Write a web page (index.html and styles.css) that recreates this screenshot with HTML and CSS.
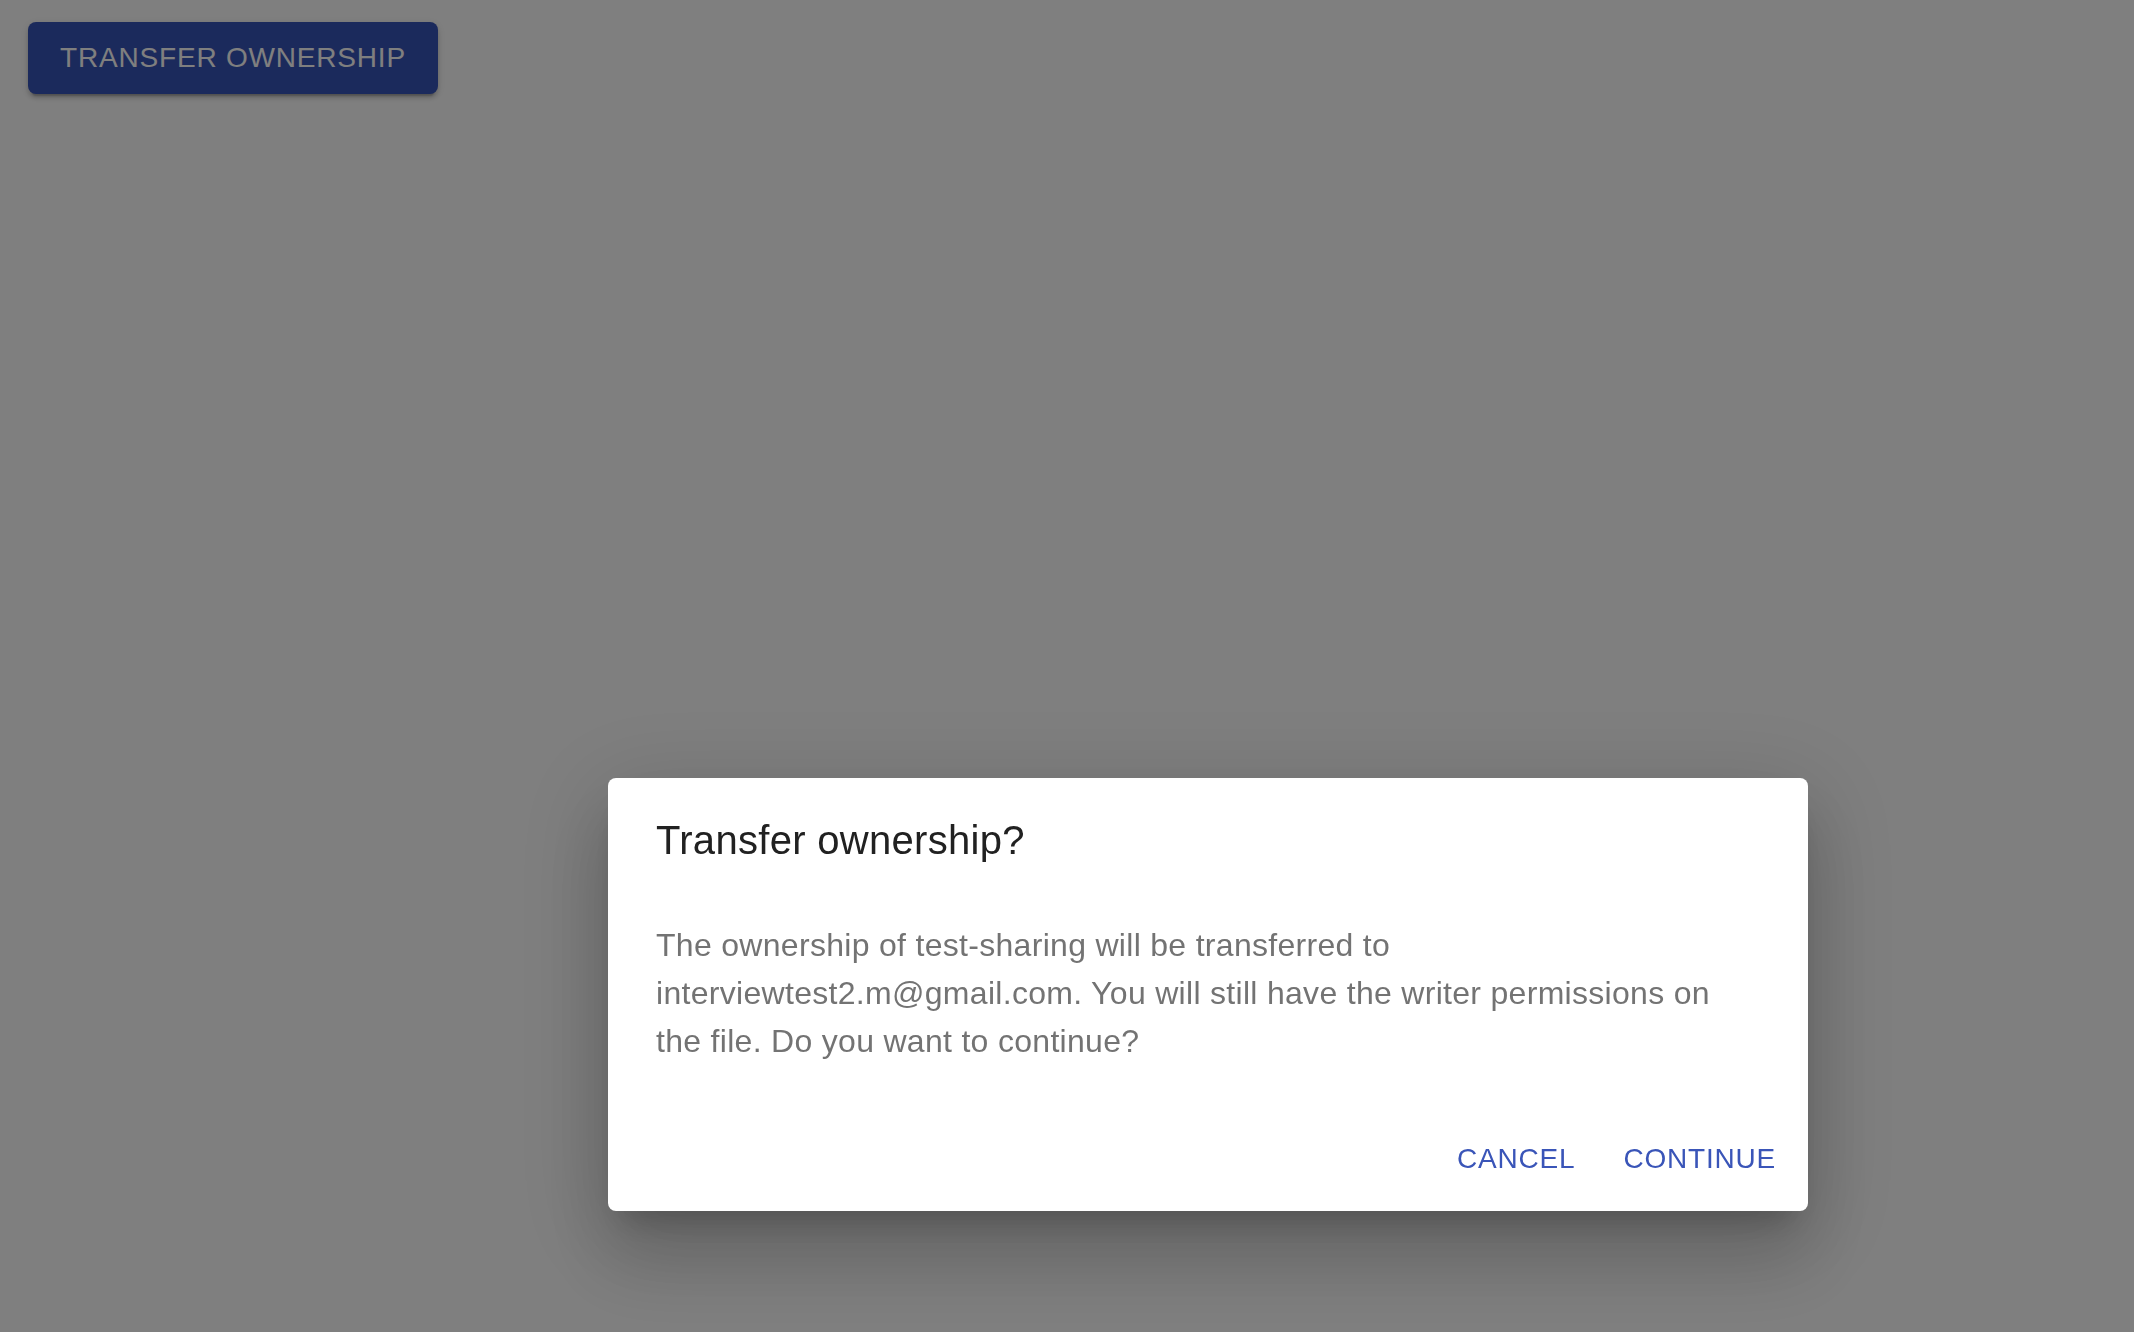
FILE: index.html
```html
<!DOCTYPE html>
<html lang="en">
<head>
<meta charset="utf-8">
<title>Transfer ownership</title>
<link rel="stylesheet" href="styles.css">
</head>
<body>
<div class="page">
  <button class="btn-contained">TRANSFER OWNERSHIP</button>
</div>
<div class="backdrop"></div>
<div class="dialog" role="dialog">
  <h2 class="dialog-title">Transfer ownership?</h2>
  <div class="dialog-content">
    <p class="dialog-text">The ownership of test-sharing will be transferred to interviewtest2.m@gmail.com. You will still have the writer permissions on the file. Do you want to continue?</p>
  </div>
  <div class="dialog-actions">
    <button class="btn-text">CANCEL</button>
    <button class="btn-text">CONTINUE</button>
  </div>
</div>
</body>
</html>
```

FILE: styles.css
```css
html, body {
  margin: 0;
  padding: 0;
  width: 100%;
  height: 100%;
  background: #ffffff;
  font-family: "Liberation Sans", Arial, sans-serif;
  overflow: hidden;
}

.page {
  padding: 22px 0 0 28px;
}

.btn-contained {
  display: inline-block;
  box-sizing: border-box;
  width: 410px;
  height: 72px;
  padding: 0 32px;
  border: none;
  border-radius: 8px;
  background: #3754b8;
  color: #ffffff;
  font-family: "Liberation Sans", Arial, sans-serif;
  font-size: 28px;
  letter-spacing: 0.8px;
  line-height: 72px;
  box-shadow: 0 6px 2px -4px rgba(0,0,0,0.2), 0 4px 4px 0 rgba(0,0,0,0.14), 0 2px 10px 0 rgba(0,0,0,0.12);
}

.backdrop {
  position: fixed;
  inset: 0;
  background: rgba(0, 0, 0, 0.5);
}

.dialog {
  position: fixed;
  left: 608px;
  top: 778px;
  width: 1200px;
  background: #ffffff;
  border-radius: 8px;
  box-shadow: 0 22px 30px -14px rgba(0,0,0,0.2), 0 48px 76px 6px rgba(0,0,0,0.14), 0 18px 92px 16px rgba(0,0,0,0.12);
}

.dialog-title {
  margin: 0;
  padding: 30px 48px 33px 48px;
  font-size: 40px;
  font-weight: 400;
  line-height: 64px;
  letter-spacing: 0.3px;
  color: #212121;
}

.dialog-content {
  padding: 16px 48px;
}

.dialog-text {
  margin: 0 0 24px 0;
  font-size: 32px;
  line-height: 48px;
  letter-spacing: 0.3px;
  color: #737373;
}

.dialog-actions {
  display: flex;
  justify-content: flex-end;
  align-items: center;
  gap: 16px;
  padding: 17px 16px 16px 16px;
}

.btn-text {
  border: none;
  background: transparent;
  padding: 12px 16px;
  height: 73px;
  font-family: "Liberation Sans", Arial, sans-serif;
  font-size: 28px;
  letter-spacing: 0.8px;
  line-height: 49px;
  color: #3a55b8;
  border-radius: 8px;
}
```
